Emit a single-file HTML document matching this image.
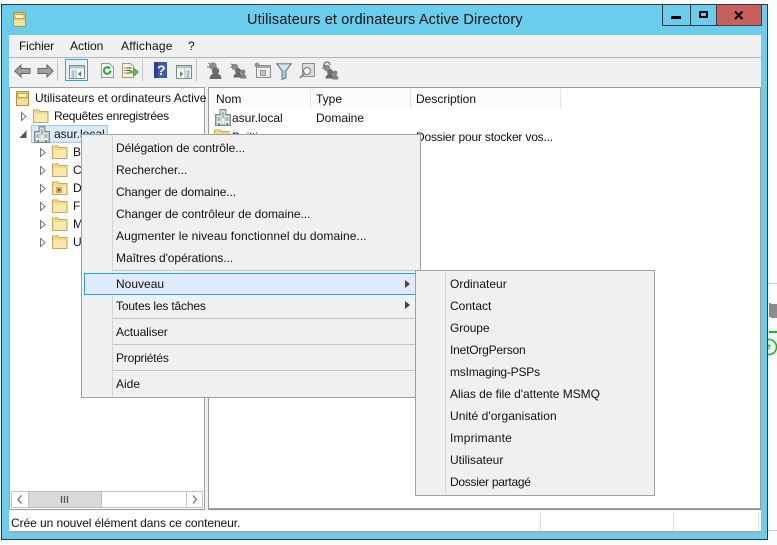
<!DOCTYPE html>
<html lang="fr">
<head>
<meta charset="utf-8">
<title>Utilisateurs et ordinateurs Active Directory</title>
<style>
html,body{margin:0;padding:0;background:#fcfcfc}
body{width:777px;height:545px;position:relative;overflow:hidden;font-family:"Liberation Sans",sans-serif;font-size:12px;color:#111}
.a{position:absolute}
.t{position:absolute;white-space:nowrap;line-height:16px;height:16px}
svg{position:absolute;overflow:visible}
.sep{position:absolute;background:#c6c6c6}
.tri{position:absolute;width:0;height:0;border-left:5px solid #444;border-top:4px solid transparent;border-bottom:4px solid transparent}
</style>
</head>
<body>
<svg width="0" height="0" style="position:absolute">
<defs>
<g id="folder"><path d="M.5 3.500V1h5.500l1 1.500h8v11H.5z" fill="#f3d98a" stroke="#c9a95c"/><path d="M1.500 5h12.500v8H1.500z" fill="#fae9ad"/></g>
<g id="srv"><path d="M5 .5h6v5h4.500v11H.5v-11H5z" fill="#b8c2c2" stroke="#7f8a8a"/><path d="M2 7h4v8H2zM10 7h4v8h-4zM6.500 2h3v13h-3z" fill="#e8eeee"/><path d="M3 14h2v2H3zM11 14h2v2h-2z" fill="#3fb34a"/><path d="M2.500 9h3M2.500 11h3M10.500 9h3M10.500 11h3M7 4h2M7 6h2M7 8h2" stroke="#6f7a7a"/></g>
<g id="exp"><path d="M.5.5L5 4.500.5 8.500z" fill="#fff" stroke="#777"/></g>
<g id="ad"><rect x=".5" y=".5" width="12" height="14" fill="#e6c868" stroke="#b2953f"/><rect x="2" y="2.500" width="9" height="4" fill="#fdf4c4" stroke="#c4a64e"/><rect x="1" y="8" width="11" height="6" fill="#f2df98"/></g>
<g id="ppl"><circle cx="5" cy="5" r="3.300" fill="#8e8e8e"/><path d="M1 2l3 1.500M0 5h3" stroke="#6f6f6f"/><circle cx="8" cy="9" r="3" fill="#6e6e6e"/><path d="M3.500 15.500c0-3 2.200-4.500 4.500-4.500s4.500 1.500 4.500 4.500z" fill="#666"/><circle cx="13" cy="10" r="2.500" fill="#858585"/><path d="M10 16.500c0-3 1.500-4.500 3.200-4.500s3.300 1.500 3.300 4.500z" fill="#808080"/></g>
</defs>
</svg>

<!-- background artefacts -->
<div class="a" style="left:768px;top:283px;width:9px;height:1px;background:#c8c8c8"></div>
<div class="a" style="left:769px;top:303px;width:2px;height:14px;background:#888"></div>
<div class="a" style="left:771px;top:304px;width:6px;height:14px;background:#8c8c8c"></div>
<div class="a" style="left:769px;top:331px;width:8px;height:2px;background:#10c010"></div>
<svg style="left:768px;top:337px" width="9" height="20"><circle cx="1" cy="10" r="7.500" fill="#fff" stroke="#10c010" stroke-width="1.600"/><path d="M1 7v6M-1 9h4" stroke="#10c010"/></svg>
<div class="a" style="left:768px;top:530px;width:9px;height:1px;background:#c8c8c8"></div>

<!-- window -->
<div class="a" style="left:1px;top:4px;width:767px;height:536px;box-sizing:border-box;border:1px solid #2f3b44;background:#6bcdec"></div>
<svg style="left:13px;top:12px" width="13" height="15"><use href="#ad"/></svg>
<div class="t" style="left:247px;top:11px;font-size:14.500px;line-height:18px;height:18px;color:#111;letter-spacing:.15px">Utilisateurs et ordinateurs Active Directory</div>

<!-- caption buttons -->
<div class="a" style="left:662px;top:5px;width:100px;height:21px;box-sizing:border-box;border:1px solid #2f3b44;border-top:0;background:#6bcdec"></div>
<div class="a" style="left:690px;top:5px;width:1px;height:20px;background:#2f3b44"></div>
<div class="a" style="left:716px;top:5px;width:46px;height:21px;box-sizing:border-box;background:#c7605a;border:1px solid #4a3a3c;border-top:0"></div>
<div class="a" style="left:671px;top:16px;width:10px;height:3px;background:#000"></div>
<div class="a" style="left:699px;top:11px;width:9px;height:7px;box-sizing:border-box;border:2px solid #000"></div>
<svg style="left:734px;top:11px" width="10" height="9"><path d="M1 .5l7.500 7.500M8.500 .5L1 8" stroke="#000" stroke-width="2.200"/></svg>

<!-- client -->
<div class="a" style="left:9px;top:35px;width:752px;height:497px;background:#f0f0f0"></div>
<div class="a" style="left:9px;top:57px;width:752px;height:1px;background:#b4b4b4"></div>
<div class="t" style="left:19px;top:38px;letter-spacing:-.15px">Fichier</div>
<div class="t" style="left:70px;top:38px">Action</div>
<div class="t" style="left:121px;top:38px;letter-spacing:.2px">Affichage</div>
<div class="t" style="left:188px;top:38px">?</div>

<!-- toolbar -->
<svg style="left:14px;top:64px" width="17" height="14"><path d="M.7 7L7 1v3.500h9v5H7V13z" fill="#a0a0a0" stroke="#666"/></svg>
<svg style="left:37px;top:64px" width="17" height="14"><path d="M16 7L10 1v3.500H1v5h9V13z" fill="#a0a0a0" stroke="#666"/></svg>
<div class="sep" style="left:57px;top:59px;width:1px;height:22px"></div>
<div class="a" style="left:65px;top:59px;width:23px;height:22px;box-sizing:border-box;border:1px solid #2fa5dc;background:#e8f1fa"></div>
<svg style="left:69px;top:65px" width="16" height="14"><rect x=".5" y=".5" width="15" height="13" fill="#fff" stroke="#808a8a"/><rect x="1" y="1" width="14" height="2.500" fill="#b9c4c4"/><path d="M2.500 6h3M2.500 8h3M2.500 10h3M2.500 12h3" stroke="#5b7fc4"/><path d="M7 4v9" stroke="#aaa"/><path d="M12 6v6L9 9z" fill="#2ea043"/></svg>
<svg style="left:101px;top:63px" width="13" height="15"><path d="M.5.500h8l4 4v10H.5z" fill="#f4f4f4" stroke="#9a9a9a"/><path d="M9.500 7.500a3.300 3.300 0 1 1-1.200-2.500" fill="none" stroke="#2eaa3c" stroke-width="2"/><path d="M7 2.500l3 2.800-3.500 1z" fill="#2eaa3c"/></svg>
<svg style="left:122px;top:63px" width="17" height="15"><path d="M.5.500h8l3 3v11H.5z" fill="#f6f1d9" stroke="#a09a80"/><path d="M2.500 5h1M2.500 7.500h1M2.500 10h1M4.500 5h5M4.500 7.500h4M4.500 10h3" stroke="#444"/><path d="M8 8h4V5l4.500 4-4.500 4v-3H8z" fill="#5cc04e" stroke="#3f9a38" stroke-width=".6"/></svg>
<div class="sep" style="left:142px;top:59px;width:1px;height:22px"></div>
<svg style="left:154px;top:62px" width="13" height="16"><rect width="13" height="16" fill="#3d59b4"/><rect x="0" y="0" width="4" height="16" fill="#2c3f95"/><text x="3" y="13" font-size="14" font-weight="bold" fill="#fff" font-family="Liberation Sans">?</text></svg>
<svg style="left:176px;top:65px" width="16" height="14"><rect x=".5" y=".5" width="15" height="13" fill="#fff" stroke="#808a8a"/><rect x="1" y="1" width="14" height="2.500" fill="#b9c4c4"/><path d="M10.500 6h3M10.500 8h3M10.500 10h3M10.500 12h3" stroke="#5b7fc4"/><path d="M9 4v9" stroke="#aaa"/><path d="M4 6v6l3-3z" fill="#2ea043"/></svg>
<div class="sep" style="left:196px;top:59px;width:1px;height:22px"></div>
<svg style="left:207px;top:62px" width="16" height="18"><circle cx="6" cy="4" r="3.800" fill="#8e8e8e"/><path d="M1 1l3 2M0 5h3" stroke="#6f6f6f"/><circle cx="8.500" cy="9" r="3.700" fill="#6e6e6e"/><path d="M2.500 17c0-4 3-5.500 6-5.500s6 1.500 6 5.500z" fill="#666"/></svg>
<svg style="left:230px;top:62px" width="17" height="18"><use href="#ppl"/></svg>
<svg style="left:254px;top:62px" width="17" height="18"><circle cx="3" cy="3" r="2.500" fill="#999"/><rect x="2.500" y="3.500" width="14" height="12" fill="#eee" stroke="#8c8c8c"/><rect x="3" y="4" width="13" height="2" fill="#aaa"/><rect x="6" y="8" width="6" height="6" fill="#999"/><path d="M7 10h4M7 12h4" stroke="#eee"/></svg>
<svg style="left:276px;top:63px" width="16" height="17"><path d="M.5.700h15L10 8v7l-4 1.500V8z" fill="#a5c8dc" stroke="#5d8296"/><path d="M2.500 1.500h11L9 7H7z" fill="#d4e7f0"/></svg>
<svg style="left:299px;top:63px" width="17" height="17"><rect x="3.500" y=".5" width="12" height="13" fill="#dcdcdc" stroke="#8f8f8f"/><circle cx="8" cy="8" r="3.500" fill="#fafafa" stroke="#777"/><path d="M5.500 10.500L1 15" stroke="#777" stroke-width="1.500"/></svg>
<svg style="left:322px;top:62px" width="17" height="18"><path d="M2 5V3a3 3 0 0 1 6 0" fill="none" stroke="#666" stroke-width="1.200"/><use href="#ppl" y="1"/></svg>

<!-- tree pane -->
<div class="a" style="left:9px;top:87px;width:196px;height:423px;box-sizing:border-box;background:#fff;border:1px solid #a0a0a0"></div>
<svg style="left:16px;top:91px" width="13" height="15"><use href="#ad"/></svg>
<div class="t" style="left:35px;top:90px">Utilisateurs et ordinateurs Active</div>
<svg style="left:21px;top:112px" width="6" height="9"><use href="#exp"/></svg>
<svg style="left:33px;top:109px" width="15" height="14"><use href="#folder"/></svg>
<div class="t" style="left:54px;top:108px;letter-spacing:-.28px">Requêtes enregistrées</div>
<svg style="left:20px;top:131px" width="7" height="7"><path d="M6 .5v6H.5z" fill="#555" stroke="#555"/></svg>
<div class="a" style="left:31px;top:125px;width:77px;height:18px;box-sizing:border-box;background:#d9ebf9;border:1px solid #9bc8ea"></div>
<svg style="left:34px;top:126px" width="16" height="17"><use href="#srv"/></svg>
<div class="t" style="left:54px;top:126px">asur.local</div>

<svg style="left:40px;top:148px" width="6" height="9"><use href="#exp"/></svg>
<svg style="left:52px;top:145px" width="15" height="14"><use href="#folder"/></svg>
<div class="t" style="left:73px;top:144px">B</div>
<svg style="left:40px;top:166px" width="6" height="9"><use href="#exp"/></svg>
<svg style="left:52px;top:163px" width="15" height="14"><use href="#folder"/></svg>
<div class="t" style="left:73px;top:162px">C</div>
<svg style="left:40px;top:184px" width="6" height="9"><use href="#exp"/></svg>
<svg style="left:52px;top:181px" width="15" height="14"><use href="#folder"/><rect x="4" y="6" width="6" height="6" fill="#c9a95c"/><rect x="6" y="8" width="2" height="2" fill="#554"/></svg>
<div class="t" style="left:73px;top:180px">D</div>
<svg style="left:40px;top:202px" width="6" height="9"><use href="#exp"/></svg>
<svg style="left:52px;top:199px" width="15" height="14"><use href="#folder"/></svg>
<div class="t" style="left:73px;top:198px">F</div>
<svg style="left:40px;top:220px" width="6" height="9"><use href="#exp"/></svg>
<svg style="left:52px;top:217px" width="15" height="14"><use href="#folder"/></svg>
<div class="t" style="left:73px;top:216px">M</div>
<svg style="left:40px;top:238px" width="6" height="9"><use href="#exp"/></svg>
<svg style="left:52px;top:235px" width="15" height="14"><use href="#folder"/></svg>
<div class="t" style="left:73px;top:234px">U</div>

<!-- scrollbar -->
<div class="a" style="left:11px;top:491px;width:192px;height:17px;box-sizing:border-box;background:#fff;border:1px solid #c4c4c4"></div>
<div class="a" style="left:28px;top:491px;width:74px;height:17px;box-sizing:border-box;background:#dadada;border:1px solid #bdbdbd"></div>
<div class="a" style="left:186px;top:491px;width:1px;height:17px;background:#c4c4c4"></div>
<svg style="left:17px;top:495px" width="6" height="9"><path d="M4.500 .5L1 4.500l3.500 4" fill="none" stroke="#666" stroke-width="1.200"/></svg>
<svg style="left:192px;top:495px" width="6" height="9"><path d="M1 .5l3.500 4L1 8.500" fill="none" stroke="#666" stroke-width="1.200"/></svg>
<svg style="left:61px;top:495px" width="8" height="9"><path d="M.5 1v7M3.500 1v7M6.500 1v7" stroke="#555" stroke-width="1.300"/></svg>

<!-- list pane -->
<div class="a" style="left:208px;top:87px;width:553px;height:423px;box-sizing:border-box;background:#fff;border:1px solid #9a9a9a;border-width:1px 1px 2px 1px"></div>
<div class="a" style="left:209px;top:88px;width:351px;height:20px;background:#fbfbfb"></div>
<div class="a" style="left:310px;top:89px;width:1px;height:19px;background:#e3e3e3"></div>
<div class="a" style="left:410px;top:89px;width:1px;height:19px;background:#e3e3e3"></div>
<div class="a" style="left:560px;top:89px;width:1px;height:19px;background:#e3e3e3"></div>
<div class="t" style="left:216px;top:91px">Nom</div>
<div class="t" style="left:316px;top:91px">Type</div>
<div class="t" style="left:416px;top:91px">Description</div>
<svg style="left:215px;top:109px" width="16" height="17"><use href="#srv"/></svg>
<div class="t" style="left:232px;top:110px">asur.local</div>
<div class="t" style="left:316px;top:110px">Domaine</div>
<svg style="left:214px;top:129px" width="15" height="14"><use href="#folder"/></svg>
<div class="t" style="left:232px;top:129px">Builtin</div>
<div class="t" style="left:416px;top:129px;letter-spacing:-.19px">Dossier pour stocker vos...</div>

<!-- status bar -->
<div class="a" style="left:9px;top:511px;width:752px;height:21px;background:#fff"></div>
<div class="a" style="left:9px;top:531px;width:752px;height:2px;background:#a9a9a9"></div>
<div class="a" style="left:540px;top:512px;width:1px;height:19px;background:#dcdcdc"></div>
<div class="a" style="left:673px;top:512px;width:1px;height:19px;background:#dcdcdc"></div>
<div class="a" style="left:758px;top:512px;width:1px;height:19px;background:#dcdcdc"></div>
<div class="t" style="left:11px;top:515px;letter-spacing:-.07px">Crée un nouvel élément dans ce conteneur.</div>

<!-- context menu -->
<div class="a" style="left:81px;top:134px;width:340px;height:264px;box-sizing:border-box;background:#f0f0f0;border:1px solid #a0a0a0"></div>
<div class="a" style="left:112px;top:136px;width:1px;height:260px;background:#d4d4d4"></div>
<div class="t" style="left:116px;top:140px;letter-spacing:-.04px">Délégation de contrôle...</div>
<div class="t" style="left:116px;top:162px">Rechercher...</div>
<div class="t" style="left:116px;top:184px;letter-spacing:-.1px">Changer de domaine...</div>
<div class="t" style="left:116px;top:206px;letter-spacing:-.03px">Changer de contrôleur de domaine...</div>
<div class="t" style="left:116px;top:228px;letter-spacing:.07px">Augmenter le niveau fonctionnel du domaine...</div>
<div class="t" style="left:116px;top:250px;letter-spacing:-.05px">Maîtres d'opérations...</div>
<div class="a" style="left:113px;top:270px;width:305px;height:1px;background:#c6c6c6"></div>
<div class="a" style="left:84px;top:273px;width:332px;height:22px;box-sizing:border-box;background:#dfebfc;border:1px solid #26a0da"></div>
<div class="t" style="left:116px;top:276px">Nouveau</div>
<div class="tri" style="left:405px;top:280px"></div>
<div class="t" style="left:116px;top:298px;letter-spacing:-.18px">Toutes les tâches</div>
<div class="tri" style="left:405px;top:301px"></div>
<div class="a" style="left:113px;top:318px;width:305px;height:1px;background:#c6c6c6"></div>
<div class="t" style="left:116px;top:324px;letter-spacing:-.1px">Actualiser</div>
<div class="a" style="left:113px;top:344px;width:305px;height:1px;background:#c6c6c6"></div>
<div class="t" style="left:116px;top:350px;letter-spacing:-.2px">Propriétés</div>
<div class="a" style="left:113px;top:370px;width:305px;height:1px;background:#c6c6c6"></div>
<div class="t" style="left:116px;top:376px">Aide</div>

<!-- submenu -->
<div class="a" style="left:415px;top:270px;width:240px;height:226px;box-sizing:border-box;background:#f0f0f0;border:1px solid #a0a0a0"></div>
<div class="a" style="left:445px;top:272px;width:1px;height:222px;background:#d4d4d4"></div>
<div class="t" style="left:450px;top:276px">Ordinateur</div>
<div class="t" style="left:450px;top:298px">Contact</div>
<div class="t" style="left:450px;top:320px;letter-spacing:-.1px">Groupe</div>
<div class="t" style="left:450px;top:342px;letter-spacing:-.2px">InetOrgPerson</div>
<div class="t" style="left:450px;top:364px;letter-spacing:-.2px">msImaging-PSPs</div>
<div class="t" style="left:450px;top:386px;letter-spacing:-.04px">Alias de file d'attente MSMQ</div>
<div class="t" style="left:450px;top:408px;letter-spacing:.05px">Unité d'organisation</div>
<div class="t" style="left:450px;top:430px;letter-spacing:.2px">Imprimante</div>
<div class="t" style="left:450px;top:452px">Utilisateur</div>
<div class="t" style="left:450px;top:474px;letter-spacing:-.27px">Dossier partagé</div>
</body>
</html>
